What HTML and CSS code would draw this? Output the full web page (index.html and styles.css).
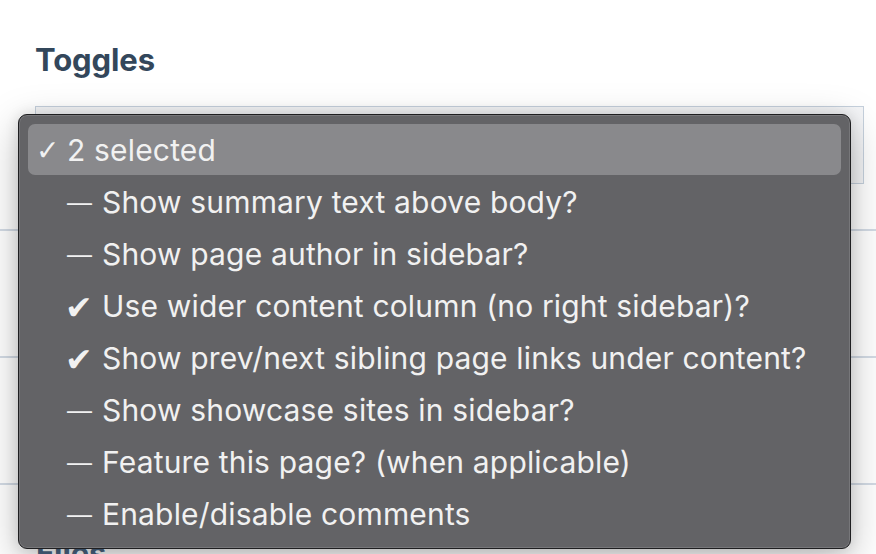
FILE: index.html
```html
<!DOCTYPE html>
<html>
<head>
<meta charset="utf-8">
<link rel="stylesheet" href="styles.css">
</head>
<body>
<div class="page">
  <section class="field">
    <h2 class="label">Toggles</h2>
    <div class="select-box"></div>
  </section>
  <div class="divider"></div>
  <div class="blank"></div>
  <div class="divider"></div>
  <div class="blank"></div>
  <div class="divider"></div>
  <h2 class="label files">Files</h2>

  <div class="menu">
    <div class="item active"><span class="tick">✓</span><span class="text">2 selected</span></div>
    <div class="item"><span class="tick"></span><span class="mark">—</span><span class="text">Show summary text above body?</span></div>
    <div class="item"><span class="tick"></span><span class="mark">—</span><span class="text">Show page author in sidebar?</span></div>
    <div class="item"><span class="tick"></span><span class="mark check">✔</span><span class="text">Use wider content column (no right sidebar)?</span></div>
    <div class="item"><span class="tick"></span><span class="mark check">✔</span><span class="text">Show prev/next sibling page links under content?</span></div>
    <div class="item"><span class="tick"></span><span class="mark">—</span><span class="text">Show showcase sites in sidebar?</span></div>
    <div class="item"><span class="tick"></span><span class="mark">—</span><span class="text">Feature this page? (when applicable)</span></div>
    <div class="item"><span class="tick"></span><span class="mark">—</span><span class="text">Enable/disable comments</span></div>
  </div>
</div>
</body>
</html>
```
FILE: styles.css
```css
html, body {
  margin: 0;
  padding: 0;
  background: #ffffff;
  overflow: hidden;
}
.page {
  position: relative;
  width: 876px;
  height: 554px;
  font-family: Inter, "Noto Sans", sans-serif;
}
.field {
  padding: 42px 12px 0 35px;
  height: 188px;
  box-sizing: border-box;
}
.label {
  margin: 0;
  font-size: 31px;
  line-height: 36px;
  font-weight: 700;
  color: #33475b;
  letter-spacing: -0.1px;
}
.select-box {
  margin-top: 28px;
  height: 76px;
  border: 1px solid #c6d1dd;
  background: #f4f5f7;
}
.divider {
  height: 2px;
  background: #d3dbe5;
}
.field + .divider {
  margin-top: 41px;
}
.blank {
  height: 125px;
}
.files {
  padding-left: 36px;
  margin-top: 50px;
  color: #4a6583;
}
.menu {
  position: absolute;
  left: 18px;
  top: 114px;
  width: 833px;
  height: 435px;
  box-sizing: border-box;
  padding: 9px;
  background: #636366;
  border: 1px solid #1f1f21;
  border-radius: 9px;
  box-shadow: inset 0 0 0 1px #77777a, 0 12px 40px rgba(0, 0, 0, 0.26), 0 0 14px rgba(0, 0, 0, 0.12);
  color: #f1f1f1;
  font-family: Inter, "Noto Sans", sans-serif;
  font-size: 30px;
}
.item {
  display: flex;
  align-items: center;
  height: 52px;
  white-space: nowrap;
}
.item.active {
  height: 51px;
  margin-bottom: 1px;
  background: #89898c;
  border-radius: 7px;
}
.tick {
  width: 39px;
  padding-left: 8px;
  box-sizing: border-box;
  font-family: "DejaVu Sans", sans-serif;
  font-size: 28px;
  flex: none;
  position: relative;
  top: 1px;
}
.mark {
  width: 35px;
  flex: none;
  font-size: 25px;
  font-family: "Liberation Sans", sans-serif;
}
.mark.check {
  font-family: "DejaVu Sans", sans-serif;
  font-size: 33px;
  position: relative;
  left: -2px;
  top: 1px;
}
.text {
  letter-spacing: 0.17px;
}
```
